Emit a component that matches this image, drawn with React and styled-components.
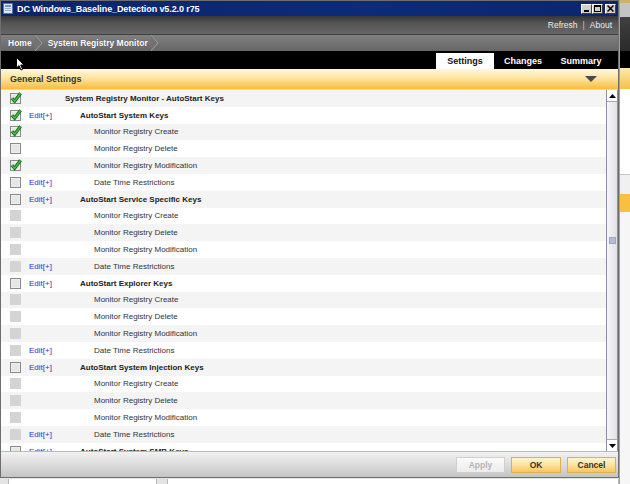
import styled, { createGlobalStyle } from 'styled-components';

const GlobalStyle = createGlobalStyle`
	html, body {
		margin: 0;
		padding: 0;
		background: #d8d8d8;
	}
	body {
		font-family: 'Liberation Sans', Arial, sans-serif;
		font-size: 8px;
	}
	* {
		box-sizing: border-box;
	}
`;

const Page = styled.div`
	display: grid;
	grid-template-columns: 619px 11px;
	grid-template-rows: 478px 6px;
	width: 630px;
	height: 484px;
	overflow: hidden;
`;

const Window = styled.div`
	grid-column: 1;
	grid-row: 1;
	display: flex;
	flex-direction: column;
	border: 1px solid #6e6e6e;
	background: #fff;
	position: relative;
	overflow: hidden;
`;

const TitleBar = styled.div`
	height: 15px;
	display: flex;
	align-items: center;
	gap: 4px;
	padding: 0 2px 0 2px;
	background: linear-gradient(90deg, #0a246a, #0c2b78 60%, #0a266e);
	color: #fff;
	font-weight: bold;
	font-size: 9px;
`;

const TitleText = styled.span`
	flex: 1;
	letter-spacing: -0.1px;
`;

const WinButtons = styled.div`
	display: flex;
`;

const WinButton = styled.div`
	width: 11px;
	height: 10px;
	background: #d4d0c8;
	border: 1px solid;
	border-color: #fff #404040 #404040 #fff;
	display: flex;
	align-items: center;
	justify-content: center;
	margin-left: ${({ $gap }) => ($gap ? '2px' : '0')};
`;

const TopBar = styled.div`
	height: 19px;
	display: flex;
	align-items: center;
	justify-content: flex-end;
	padding-right: 6px;
	background: linear-gradient(#363636, #555 40%, #666);
	border-bottom: 1px solid #404040;
	color: #ececec;
	font-size: 8.5px;
	gap: 5px;
`;

const Sep = styled.span`
	color: #c4c4c4;
`;

const Crumbs = styled.div`
	height: 16px;
	display: flex;
	align-items: stretch;
	background: linear-gradient(#808080, #666);
	color: #fff;
	font-weight: bold;
	font-size: 8.5px;
`;

const Crumb = styled.div`
	display: flex;
	align-items: center;
	padding-left: ${({ $first }) => ($first ? '7px' : '4px')};
	padding-right: 3px;
	text-shadow: 0 0 1px rgba(0, 0, 0, 0.4);
`;

const TabBar = styled.div`
	height: 18px;
	background: #000;
	display: flex;
	align-items: flex-end;
	justify-content: flex-end;
	padding-right: 8px;
	position: relative;
`;

const Tab = styled.div`
	width: 58px;
	height: 16px;
	display: flex;
	align-items: center;
	justify-content: center;
	font-weight: bold;
	font-size: 9px;
	color: ${({ $active }) => ($active ? '#111' : '#fff')};
	background: ${({ $active }) => ($active ? '#fff' : 'transparent')};
`;

const Cursor = styled.svg`
	position: absolute;
	left: 15px;
	top: 6px;
`;

const SectionHeader = styled.div`
	height: 20px;
	display: flex;
	align-items: center;
	justify-content: space-between;
	padding: 0 21px 0 9px;
	background: linear-gradient(#fff8e0, #fde4a0 45%, #f8bd3c);
	font-weight: bold;
	font-size: 9px;
	color: #333;
`;

const ListArea = styled.div`
	height: 362px;
	display: flex;
	border-top: 1px solid #f3d890;
`;

const Rows = styled.div`
	flex: 1;
	overflow: hidden;
`;

const Row = styled.div`
	height: 16.8px;
	display: flex;
	align-items: center;
	padding-left: 9px;
	background: #fff;
	&:nth-child(odd) {
		background: #f4f4f4;
	}
`;

const BoxCell = styled.div`
	width: 19px;
	display: flex;
	align-items: center;
`;

const EditCell = styled.div`
	width: 36px;
	color: #3030c8;
	font-size: 8px;
`;

const Label = styled.div`
	padding-left: ${({ $level }) => [0, 15, 29][$level]}px;
	font-weight: ${({ $bold }) => ($bold ? 'bold' : 'normal')};
	color: ${({ $bold }) => ($bold ? '#222' : '#333')};
	font-size: 8px;
	white-space: nowrap;
`;

const Scrollbar = styled.div`
	width: 12px;
	display: flex;
	flex-direction: column;
	border-left: 1px solid #8890a8;
	border-right: 1px solid #8890a8;
	background: linear-gradient(90deg, #f6f6f8, #e0e0e6);
`;

const ScrollButton = styled.div`
	height: 12px;
	display: flex;
	align-items: center;
	justify-content: center;
	background: #fff;
	border-bottom: ${({ $top }) => ($top ? '1px solid #a8a8b8' : 'none')};
	border-top: ${({ $top }) => ($top ? 'none' : '1px solid #a8a8b8')};
`;

const Track = styled.div`
	flex: 1;
	display: flex;
	flex-direction: column;
	align-items: center;
	padding-top: 135px;
`;

const Thumb = styled.div`
	width: 7px;
	height: 7px;
	background: #b4bcd8;
	border: 1px solid #9aa4c8;
`;

const Footer = styled.div`
	height: 26px;
	display: flex;
	align-items: center;
	justify-content: flex-end;
	gap: 6px;
	padding-right: 2px;
	border-top: 1px solid #f0b448;
	background: linear-gradient(#f2f2f2, #dadada 55%, #c4c4c4);
`;

const Button = styled.div`
	width: ${({ $w }) => $w}px;
	height: 16px;
	display: flex;
	align-items: center;
	justify-content: center;
	font-weight: bold;
	font-size: 8.5px;
	border: 1px solid ${({ $disabled }) => ($disabled ? '#cfcfcf' : '#e0b050')};
	color: ${({ $disabled }) => ($disabled ? '#b4b4b4' : '#333')};
	background: ${({ $disabled }) =>
		$disabled
			? 'linear-gradient(#fafafa, #ececec)'
			: 'linear-gradient(#fff4d0, #fde2a0 50%, #f8c65c)'};
`;

const SideStrip = styled.div`
	grid-column: 2;
	grid-row: 1 / span 2;
	display: flex;
	flex-direction: column;
	background: #f4f4f4;
	border-left: 1px solid #a0a0a0;
`;

const Band = styled.div`
	height: ${({ $h }) => $h}px;
	background: ${({ $bg }) => $bg};
	border-bottom: ${({ $line }) => ($line ? '1px solid #c8c8c8' : 'none')};
`;

const BottomStrip = styled.div`
	grid-column: 1;
	grid-row: 2;
	display: flex;
	gap: 10px;
	padding: 1px 0 0 8px;
	background: #e4e4e4;
`;

const Pane = styled.div`
	width: ${({ $w }) => $w}px;
	background: #fff;
	border-left: 1px solid #b8b8b8;
	border-right: 1px solid #b8b8b8;
`;

function CheckBox({ state }) {
	if (state === 'disabled') {
		return (
			<svg width="12" height="13" viewBox="0 0 12 13">
				<rect x="0" y="1" width="11" height="11" fill="#d4d4d4" />
			</svg>
		);
	}
	return (
		<svg width="13" height="13" viewBox="0 0 13 13" style={{ overflow: 'visible' }}>
			<rect x="0.5" y="1.5" width="10" height="10" fill="#f6f6f6" stroke="#8a8a8a" />
			<rect x="1.5" y="2.5" width="8" height="8" fill="#e6e6e6" />
			{state === 'checked' && (
				<>
					<path d="M2 6.2 L4.6 9.2 L10.6 1.2" stroke="#15601a" strokeWidth="3.2" fill="none" />
					<path d="M2 6.2 L4.6 9.2 L10.6 1.2" stroke="#3bc23b" strokeWidth="1.6" fill="none" />
				</>
			)}
		</svg>
	);
}

function Chevron() {
	return (
		<svg width="9" height="16" viewBox="0 0 9 16">
			<path d="M0 0 L7 8 L0 16" fill="#727272" stroke="#9e9e9e" strokeWidth="1" />
		</svg>
	);
}

const group = title => [
	{ state: 'empty', edit: true, level: 1, label: title, bold: true },
	{ state: 'disabled', level: 2, label: 'Monitor Registry Create' },
	{ state: 'disabled', level: 2, label: 'Monitor Registry Delete' },
	{ state: 'disabled', level: 2, label: 'Monitor Registry Modification' },
	{ state: 'disabled', edit: true, level: 2, label: 'Date Time Restrictions' },
];

const rows = [
	{ state: 'checked', level: 0, label: 'System Registry Monitor - AutoStart Keys', bold: true },
	{ state: 'checked', edit: true, level: 1, label: 'AutoStart System Keys', bold: true },
	{ state: 'checked', level: 2, label: 'Monitor Registry Create' },
	{ state: 'empty', level: 2, label: 'Monitor Registry Delete' },
	{ state: 'checked', level: 2, label: 'Monitor Registry Modification' },
	{ state: 'empty', edit: true, level: 2, label: 'Date Time Restrictions' },
	...group('AutoStart Service Specific Keys'),
	...group('AutoStart Explorer Keys'),
	...group('AutoStart System Injection Keys'),
	{ state: 'empty', edit: true, level: 1, label: 'AutoStart System SMB Keys', bold: true },
];

function App() {
	return (
		<>
			<GlobalStyle />
			<Page>
				<Window>
					<TitleBar>
						<svg width="10" height="11" viewBox="0 0 10 11">
							<rect x="0.5" y="0.5" width="9" height="10" fill="#dfe8f8" stroke="#5a6e9a" />
							<rect x="2" y="2" width="6" height="2" fill="#7a90c8" />
							<rect x="2" y="5" width="6" height="1" fill="#9aaad0" />
							<rect x="2" y="7" width="6" height="1" fill="#9aaad0" />
						</svg>
						<TitleText>DC Windows_Baseline_Detection v5.2.0 r75</TitleText>
						<WinButtons>
							<WinButton>
								<svg width="7" height="7" viewBox="0 0 7 7">
									<rect x="1" y="5" width="5" height="2" fill="#000" />
								</svg>
							</WinButton>
							<WinButton>
								<svg width="7" height="7" viewBox="0 0 7 7">
									<rect x="0.5" y="0.5" width="6" height="6" fill="none" stroke="#000" />
									<rect x="0" y="0" width="7" height="2" fill="#000" />
								</svg>
							</WinButton>
							<WinButton $gap>
								<svg width="7" height="7" viewBox="0 0 7 7">
									<path d="M0.5 0.5 L6.5 6.5 M6.5 0.5 L0.5 6.5" stroke="#000" strokeWidth="1.5" />
								</svg>
							</WinButton>
						</WinButtons>
					</TitleBar>
					<TopBar>
						<span>Refresh</span>
						<Sep>|</Sep>
						<span>About</span>
					</TopBar>
					<Crumbs>
						<Crumb $first>Home</Crumb>
						<Chevron />
						<Crumb>System Registry Monitor</Crumb>
						<Chevron />
					</Crumbs>
					<TabBar>
						<Cursor width="9" height="14" viewBox="0 0 9 14">
							<path d="M0.5 0.5 L0.5 11 L3 8.6 L5 13 L6.6 12.3 L4.7 8 L8 8 Z" fill="#fff" stroke="#000" strokeWidth="1" />
						</Cursor>
						<Tab $active>Settings</Tab>
						<Tab>Changes</Tab>
						<Tab>Summary</Tab>
					</TabBar>
					<SectionHeader>
						<span>General Settings</span>
						<svg width="12" height="7" viewBox="0 0 12 7">
							<path d="M0 0 L12 0 L6 6 Z" fill="#4a4a4a" />
						</svg>
					</SectionHeader>
					<ListArea>
						<Rows>
							{rows.map((r, i) => (
								<Row key={i}>
									<BoxCell>
										<CheckBox state={r.state} />
									</BoxCell>
									<EditCell>{r.edit ? 'Edit[+]' : ''}</EditCell>
									<Label $level={r.level} $bold={r.bold}>
										{r.label}
									</Label>
								</Row>
							))}
						</Rows>
						<Scrollbar>
							<ScrollButton $top>
								<svg width="7" height="4" viewBox="0 0 7 4">
									<path d="M0 4 L3.5 0 L7 4 Z" fill="#000" />
								</svg>
							</ScrollButton>
							<Track>
								<Thumb />
							</Track>
							<ScrollButton>
								<svg width="7" height="4" viewBox="0 0 7 4">
									<path d="M0 0 L7 0 L3.5 4 Z" fill="#000" />
								</svg>
							</ScrollButton>
						</Scrollbar>
					</ListArea>
					<Footer>
						<Button $w={49} $disabled>
							Apply
						</Button>
						<Button $w={50}>OK</Button>
						<Button $w={49}>Cancel</Button>
					</Footer>
				</Window>
				<SideStrip>
					<Band $h={3} $bg="#d0b070" />
					<Band $h={14} $bg="#c4c4c4" />
					<Band $h={34} $bg="linear-gradient(#404040, #2a2a2a)" />
					<Band $h={17} $bg="#000" />
					<Band $h={21} $bg="linear-gradient(#fde8b0, #f8c048)" />
					<Band $h={86} $bg="#fff" $line />
					<Band $h={19} $bg="#f0f0f0" />
					<Band $h={18} $bg="#f9c040" />
					<Band $h={272} $bg="#f6f6f6" />
				</SideStrip>
				<BottomStrip>
					<Pane $w={152} />
					<Pane $w={460} />
				</BottomStrip>
			</Page>
		</>
	);
}

export default App;
